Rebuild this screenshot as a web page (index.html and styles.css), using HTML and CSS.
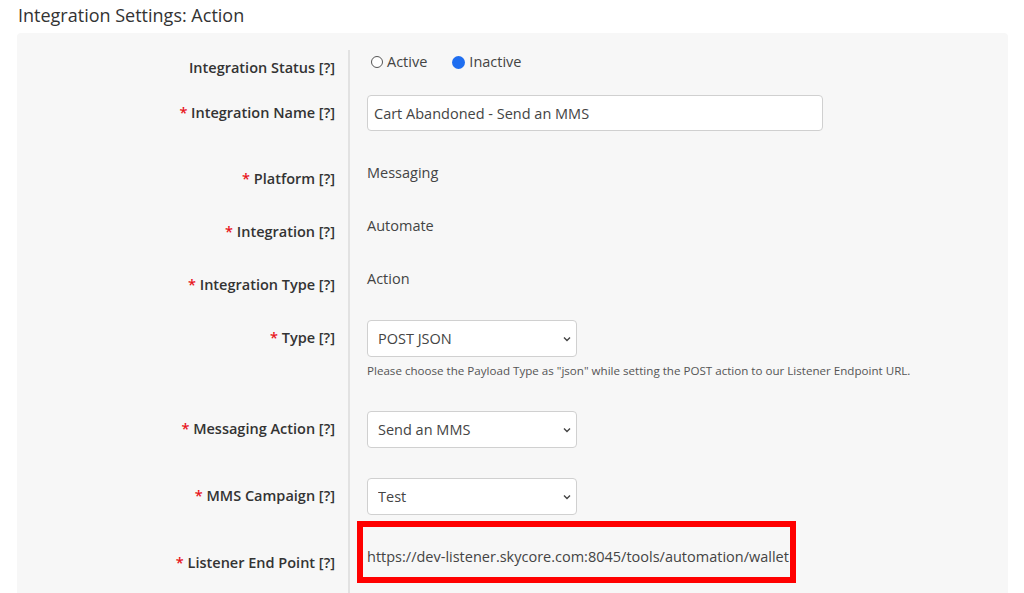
FILE: index.html
```html
<!DOCTYPE html>
<html lang="en">
<head>
    <meta charset="UTF-8">
    <meta name="viewport" content="width=device-width, initial-scale=1.0">
    <title>Integration Settings: Action</title>
    <link rel="stylesheet" href="styles.css">
</head>
<body>

    <!-- Page title -->
    <h1 class="page-title">Integration Settings: Action</h1>

    <!-- Settings form -->
    <form class="settings-panel">

        <div class="form-row form-row-tight">
            <label class="form-label">Integration Status [?]</label>
            <div class="form-field">
                <div class="radio-group">
                    <label class="radio-option"><input type="radio" name="status"> Active</label>
                    <label class="radio-option"><input type="radio" name="status" checked> Inactive</label>
                </div>
            </div>
        </div>

        <div class="form-row">
            <label class="form-label"><span class="required">*</span> Integration Name [?]</label>
            <div class="form-field">
                <input class="text-input" type="text" value="Cart Abandoned - Send an MMS">
            </div>
        </div>

        <div class="form-row">
            <label class="form-label"><span class="required">*</span> Platform [?]</label>
            <div class="form-field">
                <p class="static-value">Messaging</p>
            </div>
        </div>

        <div class="form-row">
            <label class="form-label"><span class="required">*</span> Integration [?]</label>
            <div class="form-field">
                <p class="static-value">Automate</p>
            </div>
        </div>

        <div class="form-row">
            <label class="form-label"><span class="required">*</span> Integration Type [?]</label>
            <div class="form-field">
                <p class="static-value">Action</p>
            </div>
        </div>

        <div class="form-row">
            <label class="form-label"><span class="required">*</span> Type [?]</label>
            <div class="form-field">
                <select class="select-input">
                    <option>POST JSON</option>
                </select>
                <p class="help-text">Please choose the Payload Type as "json" while setting the POST action to our Listener Endpoint URL.</p>
            </div>
        </div>

        <div class="form-row">
            <label class="form-label"><span class="required">*</span> Messaging Action [?]</label>
            <div class="form-field">
                <select class="select-input">
                    <option>Send an MMS</option>
                </select>
            </div>
        </div>

        <div class="form-row">
            <label class="form-label"><span class="required">*</span> MMS Campaign [?]</label>
            <div class="form-field">
                <select class="select-input">
                    <option>Test</option>
                </select>
            </div>
        </div>

        <div class="form-row">
            <label class="form-label"><span class="required">*</span> Listener End Point [?]</label>
            <div class="form-field">
                <p class="static-value endpoint">https://dev-listener.skycore.com:8045/tools/automation/wallet</p>
            </div>
        </div>

    </form>

</body>
</html>
```

FILE: styles.css
```css
body {
    margin: 0;
    font-family: 'Open Sans', 'Noto Sans', sans-serif;
    font-size: 14.5px;
    color: #444;
    background-color: #fff;
    overflow: hidden;
}

/* Page heading */
.page-title {
    margin: 0;
    padding: 3px 0 0 18px;
    height: 30px;
    font-size: 18px;
    font-weight: 400;
    line-height: 24px;
    color: #333;
}

/* Grey panel holding the form */
.settings-panel {
    margin: 0 16px 0 17px;
    padding-top: 17px;
    min-height: 560px;
    background-color: #f7f7f7;
    border-radius: 4px 4px 0 0;
}

/* One label + field row */
.form-row {
    display: grid;
    grid-template-columns: 331px 1fr;
}

.form-label {
    padding: 8px 13px 0 0;
    text-align: right;
    font-weight: 600;
    line-height: 20px;
    color: #333;
}

.required {
    color: #e8141b;
}

.form-field {
    border-left: 2px solid #e2e2e2;
    padding: 0 0 30px 17px;
}

.form-row-tight .form-field {
    padding-bottom: 23px;
}

/* Plain text values */
.static-value {
    margin: 0;
    padding-top: 1px;
    line-height: 22px;
    color: #444;
}

/* Radio buttons */
.radio-group {
    display: flex;
    gap: 21px;
    padding-top: 2px;
    line-height: 20px;
}

.radio-option {
    display: flex;
    align-items: center;
    gap: 4px;
    color: #444;
}

.radio-option input {
    appearance: none;
    margin: 0 0 0 4px;
    width: 12px;
    height: 12px;
    border: 1.5px solid #555;
    border-radius: 50%;
    background-color: #fff;
}

.radio-option input:checked {
    width: 13px;
    height: 13px;
    border: none;
    background-color: #1f6ef0;
}

/* Text input and selects */
.text-input,
.select-input {
    box-sizing: border-box;
    height: 36px;
    font-family: inherit;
    font-size: 14.5px;
    color: #444;
    background-color: #fff;
    border: 1px solid #d0d0d0;
    border-radius: 4px;
}

.text-input {
    display: block;
    width: 456px;
    padding: 0 6px;
}

.select-input {
    display: block;
    width: 210px;
    height: 37px;
    padding: 0 10px;
    appearance: none;
    background-image: url("data:image/svg+xml;utf8,<svg xmlns='http://www.w3.org/2000/svg' width='8' height='6' viewBox='0 0 8 6'><path d='M1 1.5l3 3 3-3' fill='none' stroke='%23444' stroke-width='1.4'/></svg>");
    background-repeat: no-repeat;
    background-position: right 5px center;
}

.help-text {
    margin: 4px 0 0;
    font-size: 11.6px;
    line-height: 20px;
    color: #555;
}

/* Red annotation frame round the endpoint URL */
.endpoint {
    position: relative;
    width: 424px;
    white-space: nowrap;
}

.endpoint::after {
    content: "";
    position: absolute;
    top: -24px;
    right: -5px;
    bottom: -15px;
    left: -10px;
    border: 6px solid #ff0000;
}
```
